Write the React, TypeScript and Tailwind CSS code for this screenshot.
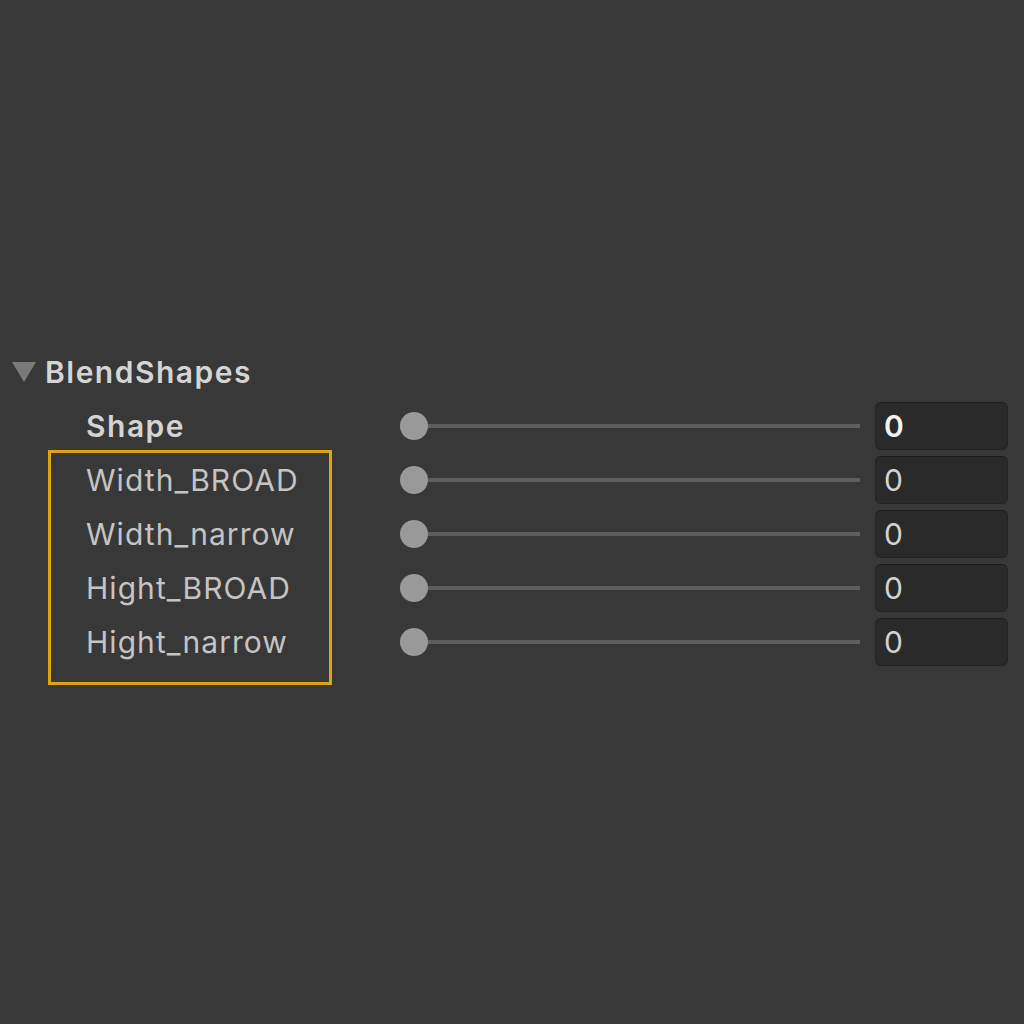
import React from "react";

const shapes = [
  { name: "Shape", bold: true },
  { name: "Width_BROAD" },
  { name: "Width_narrow" },
  { name: "Hight_BROAD" },
  { name: "Hight_narrow" },
];

function Row({ name, bold }: { name: string; bold?: boolean }) {
  return (
    <div className="flex h-[54px] items-center">
      <div
        className={`w-[400px] pl-[86px] text-[30px] leading-none ${
          bold ? "font-semibold tracking-[0.05em] text-[#d4d4d4]" : "tracking-[0.035em] text-[#c4c4c4]"
        }`}
      >
        {name}
      </div>
      {/* slider */}
      <div className="relative flex h-[28px] flex-1 items-center">
        <div className="h-[4px] w-full bg-[#5e5e5e]" />
        <div className="absolute left-0 top-0 h-[28px] w-[28px] rounded-full bg-[#999999]" />
      </div>
      <div className="ml-[15px] mr-[16px] flex h-[48px] w-[133px] items-center rounded-[6px] border border-[#232323] border-t-[#1c1c1c] bg-[#2a2a2a] pl-[8px]">
        <span
          className={`text-[30px] leading-none ${
            bold ? "font-semibold text-[#f2f2f2]" : "text-[#d2d2d2]"
          }`}
        >
          0
        </span>
      </div>
    </div>
  );
}

export default function App() {
  return (
    <div
      className="relative h-[1024px] w-[1024px] bg-[#383838] pt-[345px]"
      style={{ fontFamily: "Inter, 'Noto Sans', sans-serif" }}
    >
      <div className="flex h-[54px] items-center pl-[12px]">
        <svg width="24" height="20" viewBox="0 0 24 20" className="mr-[9px]">
          <polygon points="0,0 24,0 12,20" fill="#7a7a7a" />
        </svg>
        <span className="text-[30px] font-semibold leading-none tracking-[0.05em] text-[#d4d4d4]">
          BlendShapes
        </span>
      </div>
      {shapes.map((s) => (
        <Row key={s.name} name={s.name} bold={s.bold} />
      ))}
      {/* highlight annotation */}
      <div className="pointer-events-none absolute left-[48px] top-[450px] h-[235px] w-[284px] border-[3px] border-[#dca512]" />
    </div>
  );
}
